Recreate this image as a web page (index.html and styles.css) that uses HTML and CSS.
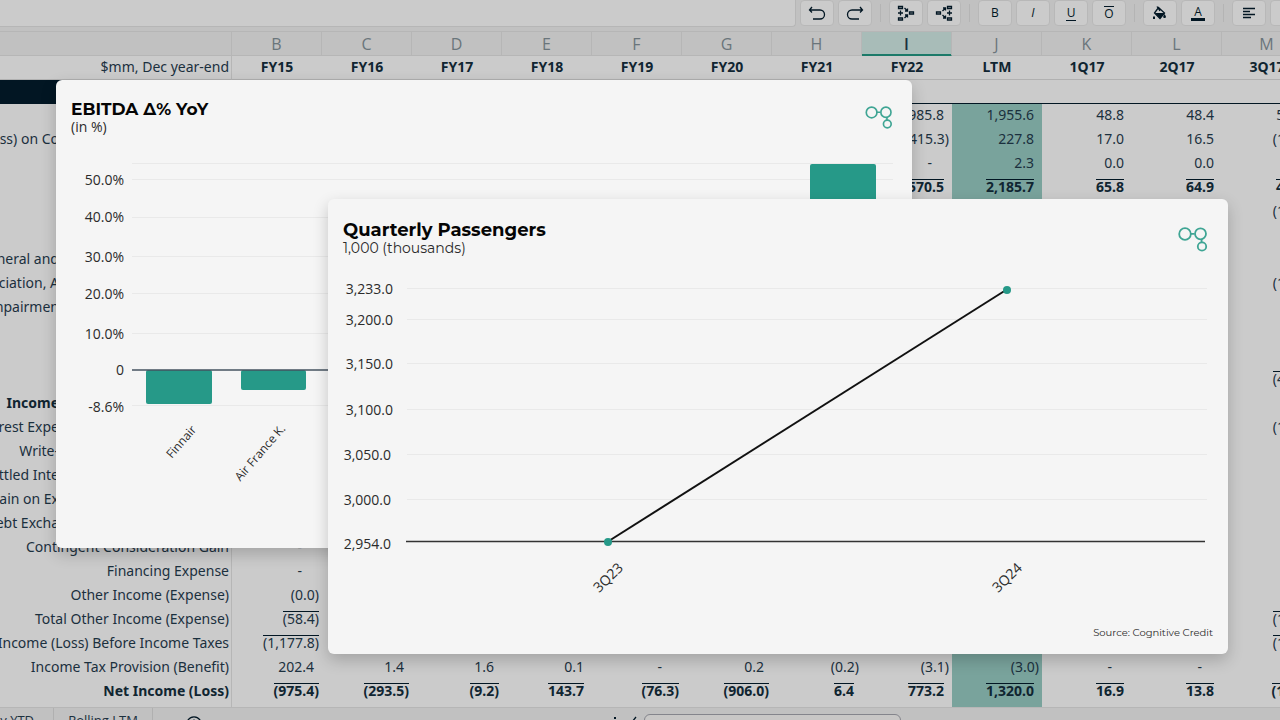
FILE: index.html
```html
<!DOCTYPE html>
<html lang="en">
<head>
<meta charset="utf-8">
<meta name="viewport" content="width=device-width, initial-scale=1">
<title>Cognitive Credit – Financials</title>
<link rel="stylesheet" href="styles.css">
</head>
<body>
<div class="toolbar" role="toolbar" aria-label="Formatting">
  <input class="formula" type="text" aria-label="Formula">
  <div class="group">
    <button class="tool" aria-label="Undo"><svg width="18" height="14" viewBox="0 0 18 14"><path d="M4 1 1.500 4 4 6.500M1.500 4H12a4 4 0 0 1 0 9H5"/></svg></button>
    <button class="tool" aria-label="Redo"><svg width="18" height="14" viewBox="0 0 18 14"><path d="M14 1l2.500 3L14 6.500M16.500 4H6a4 4 0 0 0 0 9h7"/></svg></button>
  </div>
  <div class="group">
    <button class="tool" aria-label="Split cells"><svg width="18" height="18" viewBox="0 0 18 18"><path d="M1.500 2.500h4v2h-4zM1.500 14h4v2h-4zM12.500 8h4v2h-4zM1 9h5M3.500 6.500v5M7.500 4l3 3M10.500 4.500V7H8M7.500 14l3-3M8 11h2.500v2.500"/></svg></button>
    <button class="tool" aria-label="Merge cells"><svg width="18" height="18" viewBox="0 0 18 18"><path d="M12.500 2.500h4v2h-4zM12.500 14h4v2h-4zM1.500 8h4v2h-4zM12 9h5M14.500 6.500v5M7.500 7l3-3M8 4h2.500v2.500M7.500 11l3 3M10.500 11.500V14H8"/></svg></button>
  </div>
  <div class="group">
    <button class="tool" aria-label="Bold"><span class="glyph heavy">B</span></button>
    <button class="tool" aria-label="Italic"><span class="glyph slant">I</span></button>
    <button class="tool" aria-label="Underline"><span class="glyph under">U</span></button>
    <button class="tool" aria-label="Overline"><span class="glyph over">O</span></button>
  </div>
  <div class="group">
    <button class="tool" aria-label="Fill colour"><svg width="18" height="16" viewBox="0 0 18 16"><path d="M7.500 2.500 13.500 8 9 13.500 3.500 8zM6 1.500l3 4.500"/><path class="solid" d="M4 8h9.500L9 13.500zM13.500 9c2 2.500 1.800 4 0 4s-1.800-1.500 0-4zM2 11.500h2V14H2z"/></svg></button>
    <button class="tool" aria-label="Text colour"><span class="glyph ink">A</span></button>
  </div>
  <div class="group">
    <button class="tool" aria-label="Align left"><svg width="14" height="12" viewBox="0 0 14 12"><path d="M1 1.500h12M1 4.500h7M1 7.500h12M1 10.500h8"/></svg></button>
    <button class="tool" aria-label="Align centre"></button>
  </div>
</div>

<main class="sheet">
<table class="grid">
  <colgroup><col class="col-label"><col span="12" class="col-data"></colgroup>
  <thead>
    <tr class="letters"><th></th><th>B</th><th>C</th><th>D</th><th>E</th><th>F</th><th>G</th><th>H</th><th class="active">I</th><th>J</th><th>K</th><th>L</th><th>M</th></tr>
    <tr class="periods"><th class="unit">$mm, Dec year-end</th><th>FY15</th><th>FY16</th><th>FY17</th><th>FY18</th><th>FY19</th><th>FY20</th><th>FY21</th><th>FY22</th><th>LTM</th><th>1Q17</th><th>2Q17</th><th>3Q17</th></tr>
    <tr class="band"><th></th><td colspan="12"></td></tr>
  </thead>
  <tbody>
    <tr><th></th><td><td><td><td><td><td><td><td>1,985.8<td>1,955.6<td>48.8<td>48.4<td>51.8</tr>
    <tr><th class="cut">(Loss) on Co</th><td><td><td><td><td><td><td><td class="neg">(415.3)<td>227.8<td>17.0<td>16.5<td class="neg">(15.3)</tr>
    <tr><th></th><td><td><td><td><td><td><td><td class="nil">-<td>2.3<td>0.0<td>0.0<td></tr>
    <tr class="total"><th></th><td><td><td><td><td><td><td><td><span class="sum">1,570.5</span><td><span class="sum">2,185.7</span><td><span class="sum">65.8</span><td><span class="sum">64.9</span><td><span class="sum">41.5</span></tr>
    <tr><th></th><td><td><td><td><td><td><td><td><td><td><td><td class="neg">(12.4)</tr>
    <tr><th></th><td><td><td><td><td><td><td><td><td><td><td><td></tr>
    <tr><th class="cut">General and</th><td><td><td><td><td><td><td><td><td><td><td><td></tr>
    <tr><th class="cut">Depreciation, A</th><td><td><td><td><td><td><td><td><td><td><td><td class="neg">(18.2)</tr>
    <tr><th class="cut">Impairmen</th><td><td><td><td><td><td><td><td><td><td><td><td></tr>
    <tr><th></th><td><td><td><td><td><td><td><td><td><td><td><td></tr>
    <tr><th></th><td><td><td><td><td><td><td><td><td><td><td><td></tr>
    <tr><th></th><td><td><td><td><td><td><td><td><td><td><td><td class="neg"><span class="sum">(43.1)</span></tr>
    <tr class="total"><th class="cut">Income</th><td><td><td><td><td><td><td><td><td><td><td><td></tr>
    <tr><th class="cut">Interest Expe</th><td><td><td><td><td><td><td><td><td><td><td><td class="neg">(12.7)</tr>
    <tr><th class="cut">Write-</th><td><td><td><td><td><td><td><td><td><td><td><td></tr>
    <tr><th class="cut">Settled Inte</th><td><td><td><td><td><td><td><td><td><td><td><td></tr>
    <tr><th class="cut">Gain on Ex</th><td><td><td><td><td><td><td><td><td><td><td><td></tr>
    <tr><th class="cut">Debt Excha</th><td><td><td><td><td><td><td><td><td><td><td><td></tr>
    <tr><th>Contingent Consideration Gain</th><td class="nil">-<td><td><td><td><td><td><td><td><td><td><td></tr>
    <tr><th>Financing Expense</th><td class="nil">-<td><td><td><td><td><td><td><td><td><td><td></tr>
    <tr><th>Other Income (Expense)</th><td class="neg">(0.0)<td><td><td><td><td><td><td><td><td><td><td></tr>
    <tr><th>Total Other Income (Expense)</th><td class="neg"><span class="sum">(58.4)</span><td><td><td><td><td><td><td><td><td><td><td class="neg"><span class="sum">(12.7)</span></tr>
    <tr><th>Income (Loss) Before Income Taxes</th><td class="neg"><span class="sum">(1,177.8)</span><td><td><td><td><td><td><td><td><td><td><td class="neg"><span class="sum">(14.8)</span></tr>
    <tr><th>Income Tax Provision (Benefit)</th><td>202.4<td>1.4<td>1.6<td>0.1<td class="nil">-<td>0.2<td class="neg">(0.2)<td class="neg">(3.1)<td class="neg">(3.0)<td class="nil">-<td class="nil">-<td></tr>
    <tr class="total last"><th>Net Income (Loss)</th><td class="neg"><span class="sum">(975.4)</span><td class="neg"><span class="sum">(293.5)</span><td class="neg"><span class="sum">(9.2)</span><td><span class="sum">143.7</span><td class="neg"><span class="sum">(76.3)</span><td class="neg"><span class="sum">(906.0)</span><td><span class="sum">6.4</span><td><span class="sum">773.2</span><td><span class="sum">1,320.0</span><td><span class="sum">16.9</span><td><span class="sum">13.8</span><td class="neg"><span class="sum">(14.8)</span></tr>
  </tbody>
</table>
</main>

<footer class="tabs">
  <button class="tab first">Quarterly YTD</button>
  <button class="tab">Rolling LTM</button>
  <button class="add" aria-label="Add sheet"><svg width="16" height="16" viewBox="0 0 16 16"><path d="M8 .8a7.200 7.200 0 1 0 .01 0zM8 3.500v9M3.500 8h9"/></svg></button>
  <div class="scroller">
    <svg width="26" height="16" viewBox="0 0 26 16"><path class="solid" d="M0 3h2v2H0zM0 8h2v2H0z"/><path d="M22 3l-4 5 4 5"/></svg>
    <div class="thumb"></div>
  </div>
</footer>

<section class="card card-ebitda">
  <header class="card-head">
    <div>
      <h2 class="title">EBITDA Δ% YoY</h2>
      <p class="subtitle plain">(in %)</p>
    </div>
    <svg class="logo" width="28" height="24" viewBox="0 0 30 26"><path d="M12 6.800h4.500M23.600 12v3.500"/><circle cx="7" cy="7" r="5.800"/><circle cx="22.500" cy="6.800" r="5.500"/><circle cx="24" cy="19.500" r="4.200"/></svg>
  </header>
  <svg class="chart" viewBox="0 0 856 414" role="img" aria-label="EBITDA change year on year by airline">
    <path class="gridline" d="M76 29.500H837M76 45.500H837M76 83.500H837M76 122.500H837M76 159.500H837M76 199.500H837M76 271.500H837"/>
    <g class="bars"><rect x="90" y="236" width="66" height="34" rx="2"/><rect x="185" y="236" width="65" height="20" rx="2"/><rect x="754" y="30" width="66" height="206" rx="2"/></g>
    <path class="axis" d="M76 236H837"/>
    <g class="ticks"><text x="68" y="51">50.0%</text><text x="68" y="88">40.0%</text><text x="68" y="128">30.0%</text><text x="68" y="165">20.0%</text><text x="68" y="205">10.0%</text><text x="68" y="241">0</text><text x="68" y="278">-8.6%</text></g>
    <g class="ticks small"><text transform="translate(141 296) rotate(-49)">Finnair</text><text transform="translate(230 295) rotate(-49)">Air France K.</text></g>
  </svg>
</section>

<section class="card card-passengers">
  <header class="card-head">
    <div>
      <h2 class="title">Quarterly Passengers</h2>
      <p class="subtitle">1,000 (thousands)</p>
    </div>
    <svg class="logo" width="30" height="26" viewBox="0 0 30 26"><path d="M12 6.800h4.500M23.600 12v3.500"/><circle cx="7" cy="7" r="5.800"/><circle cx="22.500" cy="6.800" r="5.500"/><circle cx="24" cy="19.500" r="4.200"/></svg>
  </header>
  <svg class="chart" viewBox="0 0 900 360" role="img" aria-label="Quarterly passengers, 3Q23 to 3Q24">
    <path class="gridline" d="M79 31.500H879M79 62.500H879M79 106.500H879M79 152.500H879M79 197.500H879M79 242.500H879"/>
    <path class="axis dark" d="M78 284.500H877"/>
    <path class="trend" d="M280 284.500 678 33"/>
    <circle class="dot" cx="280" cy="285" r="4"/><circle class="dot" cx="679" cy="33" r="4"/>
    <g class="ticks"><text x="65" y="37">3,233.0</text><text x="65" y="68">3,200.0</text><text x="65" y="112">3,150.0</text><text x="65" y="158">3,100.0</text><text x="63" y="203">3,050.0</text><text x="63" y="248">3,000.0</text><text x="63" y="292">2,954.0</text></g>
    <g class="ticks"><text transform="translate(296 312) rotate(-44)">3Q23</text><text transform="translate(695 312) rotate(-44)">3Q24</text></g>
  </svg>
  <p class="source">Source: Cognitive Credit</p>
</section>
</body>
</html>
```

FILE: styles.css
```css
* { box-sizing: border-box; }

body {
  margin: 0;
  height: 100vh;
  overflow: hidden;
  position: relative;
  background: #cbcbcb;
  color: #1b303e;
  font: 14px/24px "Open Sans", "Noto Sans", sans-serif;
}

button, input { font: inherit; color: inherit; }

/* Toolbar */
.toolbar {
  display: flex;
  align-items: flex-start;
  gap: 4px;
  height: 32px;
  background: #c1c1c1;
  border-bottom: 1px solid #b6b6b6;
  overflow: hidden;
}
.formula {
  flex: 0 0 796px;
  height: 27px;
  border: 1px solid #b6b6b6;
  border-width: 0 1px 1px 0;
  border-radius: 0 0 4px 0;
  background: #cbcbcb;
}
.group {
  display: flex;
  flex: none;
  gap: 4px;
  padding-right: 9px;
  margin-right: 4px;
  position: relative;
}
.group::after {
  content: "";
  position: absolute;
  right: 0;
  top: 4px;
  height: 18px;
  border-right: 1px solid #b4b4b4;
}
.tool {
  display: flex;
  align-items: center;
  justify-content: center;
  width: 34px;
  height: 26px;
  padding: 0;
  border: 1px solid #b8b8b8;
  border-radius: 4px;
  background: #cbcbcb;
}
svg path { fill: none; stroke: #021623; stroke-width: 1.3; }
svg path.solid { fill: #021623; stroke: none; }
.glyph {
  font-size: 12px;
  line-height: 14px;
  min-width: 10px;
  text-align: center;
  color: #021623;
}
.heavy { font-weight: 500; }
.slant { font-style: italic; }
.under { border-bottom: 1px solid #021623; }
.over { border-top: 1px solid #021623; }
.ink { min-width: 14px; line-height: 13px; border-bottom: 3px solid #021623; }

/* Sheet */
.sheet { overflow: hidden; }
.grid {
  width: 1312px;
  table-layout: fixed;
  border-collapse: separate;
  border-spacing: 0;
}
.col-label { width: 232px; }
.col-data { width: 90px; }
.grid th, .grid td {
  height: 24px;
  padding: 0 8px 0 0;
  text-align: right;
  white-space: nowrap;
  line-height: 22px;
  vertical-align: top;
}
.grid tbody, .grid .periods { font-family: "Noto Sans", "Open Sans", sans-serif; }
.grid tbody th {
  display: flex;
  justify-content: flex-end;
  overflow: hidden;
  padding-right: 2px;
  border-right: 1px solid #b6b6b6;
  font-weight: 400;
}
.grid tbody .cut { padding-right: 172px; }
.grid .neg { padding-right: 3px; }
.grid .nil { padding-right: 20px; }
.grid tbody td:nth-child(10) { background: #79a39c; }
.letters th {
  background: #c1c1c1;
  border: solid #b6b6b6;
  border-width: 0 1px 1px 0;
  color: #6a757b;
  font-size: 16px;
  font-weight: 400;
}
.grid .letters th { padding: 2px 0 0; text-align: center; line-height: 21px; }
.grid .periods th { padding: 0; text-align: center; line-height: 21px; }
.grid .letters .active {
  background: #a8bcb8;
  border-bottom-color: #1c7a69;
  box-shadow: inset 0 -1px #1c7a69;
  color: #1b303e;
  font-weight: 600;
}
.periods th { border-bottom: 1px solid #b0b0b0; color: #102531; font-weight: 700; }
.grid .periods .unit {
  padding-right: 2px;
  border-right: 1px solid #b6b6b6;
  color: #1b303e;
  font-weight: 400;
  text-align: right;
}
.band th { background: #021623; }
.band td { border-bottom: 1px solid #021623; }
.total td, .grid .total th { color: #102531; font-weight: 700; }
.sum {
  display: inline-block;
  line-height: 14px;
  border-top: 1px solid #021623;
}
.grid .last th, .grid .last td { height: 27px; }

/* Sheet tabs */
.tabs {
  display: flex;
  align-items: flex-start;
  height: 32px;
  background: #c1c1c1;
  border-top: 1px solid #b6b6b6;
}
.tab {
  width: 99px;
  height: 24px;
  padding: 0;
  border: 0;
  border-right: 1px solid #b0b0b0;
  background: none;
  font-size: 13px;
  line-height: 24px;
  text-align: center;
  white-space: nowrap;
}
.tab.first {
  display: flex;
  justify-content: flex-end;
  width: 54px;
  padding-right: 19px;
}
.add { width: 82px; height: 26px; padding: 5px 0 0; border: 0; background: none; line-height: 0; }
.scroller { display: flex; flex: 1; gap: 4px; padding: 6px 0 0 379px; }
.thumb {
  width: 257px;
  height: 16px;
  border: 1px solid #84858c;
  border-radius: 6px;
  background: #c8c7c6;
}

/* Chart windows */
.card {
  position: absolute;
  border-radius: 6px;
  background: #f5f5f5;
  box-shadow: 0 6px 16px rgba(0, 0, 0, .2);
  color: #2b2b2b;
}
.card-ebitda { left: 56px; top: 80px; width: 856px; }
.card-passengers { left: 328px; top: 199px; width: 900px; }
.card-head {
  display: flex;
  justify-content: space-between;
  padding: 19px 19px 0 15px;
}
.card-passengers .card-head { padding: 21px 20px 0 15px; }
.title {
  margin: 0;
  color: #050505;
  font: 700 17px/20px Montserrat, Inter, sans-serif;
}
.card-passengers .title { font-size: 18px; }
.subtitle {
  margin: 0;
  font: 400 14px/17px Montserrat, Inter, sans-serif;
}
.subtitle.plain { font: 14px/15px "Open Sans", sans-serif; }
.logo { margin-top: 7px; }
.logo path, .logo circle { fill: none; stroke: #3fa594; stroke-width: 1.8; }
.chart { display: block; width: 100%; }
.chart .gridline { stroke: #e9e9e9; stroke-width: 1; }
.chart .axis { stroke: #45525f; stroke-width: 1.5; }
.chart .dark { stroke: #333; }
.chart .trend { stroke: #111; stroke-width: 2; }
.bars rect, .dot { fill: #269988; }
.ticks text { fill: #2b2b2b; font-size: 14px; text-anchor: end; }
.ticks.small text { font-size: 12px; }
.source {
  margin: 0;
  padding: 8px 15px 13px;
  font: 400 10px/16px Montserrat, Inter, sans-serif;
  text-align: right;
}
```
